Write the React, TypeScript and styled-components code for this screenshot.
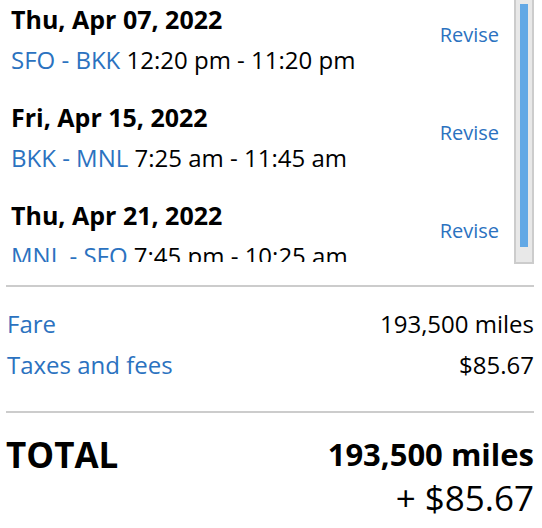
import styled, { createGlobalStyle } from 'styled-components';

const GlobalStyle = createGlobalStyle`
  html, body {
    margin: 0;
    padding: 0;
    background: #ffffff;
  }
  body {
    font-family: 'Open Sans', 'Noto Sans', sans-serif;
    color: #000000;
  }
`;

interface Flight {
  date: string;
  route: string;
  times: string;
}

const flights: Flight[] = [
  { date: 'Thu, Apr 07, 2022', route: 'SFO - BKK', times: '12:20 pm - 11:20 pm' },
  { date: 'Fri, Apr 15, 2022', route: 'BKK - MNL', times: '7:25 am - 11:45 am' },
  { date: 'Thu, Apr 21, 2022', route: 'MNL - SFO', times: '7:45 pm - 10:25 am' },
];

const App = () => {
  return (
    <>
      <GlobalStyle />
      <Page>
        <FlightPanel>
          <FlightList>
            {flights.map((flight, index) => (
              <FlightRow key={index}>
                <FlightInfo>
                  <FlightDate>{flight.date}</FlightDate>
                  <FlightLine>
                    <Route>{flight.route}</Route> {flight.times}
                  </FlightLine>
                </FlightInfo>
                <Revise href="#">Revise</Revise>
              </FlightRow>
            ))}
          </FlightList>
          <ScrollTrack>
            <ScrollThumb />
          </ScrollTrack>
        </FlightPanel>
        <Divider />
        <PriceRows>
          <PriceRow>
            <PriceLabel>Fare</PriceLabel>
            <PriceValue>193,500 miles</PriceValue>
          </PriceRow>
          <PriceRow>
            <PriceLabel>Taxes and fees</PriceLabel>
            <PriceValue>$85.67</PriceValue>
          </PriceRow>
        </PriceRows>
        <Divider />
        <Total>
          <TotalLabel>TOTAL</TotalLabel>
          <TotalValue>
            <TotalMiles>193,500 miles</TotalMiles>
            <TotalCash>+ $85.67</TotalCash>
          </TotalValue>
        </Total>
      </Page>
    </>
  );
};

export default App;

const Page = styled.div`
  width: 528px;
  padding: 0 8px 0 6px;
`;

const FlightPanel = styled.div`
  display: flex;
  height: 264px;
`;

const FlightList = styled.div`
  flex: 1;
  height: 262px;
  overflow: hidden;
`;

const FlightRow = styled.div`
  display: flex;
  align-items: center;
  justify-content: space-between;
  height: 80px;
  padding: 0 15px 18px 5px;
`;

const FlightInfo = styled.div`
  display: flex;
  flex-direction: column;
  white-space: nowrap;
`;

const FlightDate = styled.div`
  font-size: 25px;
  font-weight: 700;
  line-height: 39px;
`;

const FlightLine = styled.div`
  font-size: 24px;
  line-height: 41px;
`;

const Route = styled.span`
  color: #2b72c0;
`;

const Revise = styled.a`
  color: #2b72c0;
  font-size: 20px;
  text-decoration: none;
  margin-bottom: 12px;
`;

const ScrollTrack = styled.div`
  box-sizing: border-box;
  width: 20px;
  height: 264px;
  padding: 4px 4px 0;
  background: #e8e8e8;
  border: 2px solid #cccccc;
  border-top: none;
`;

const ScrollThumb = styled.div`
  width: 8px;
  height: 243px;
  background: #62a8e5;
`;

const Divider = styled.hr`
  margin: 21px 0 0;
  border: none;
  border-top: 2px solid #cccccc;
`;

const PriceRows = styled.div`
  display: flex;
  flex-direction: column;
  padding: 16px 0 5px 1px;
`;

const PriceRow = styled.div`
  display: flex;
  justify-content: space-between;
  align-items: baseline;
  font-size: 24px;
  line-height: 41px;
`;

const PriceLabel = styled.span`
  color: #2b72c0;
`;

const PriceValue = styled.span`
  color: #000000;
`;

const Total = styled.div`
  display: flex;
  justify-content: space-between;
  align-items: flex-start;
  padding-top: 19px;
`;

const TotalLabel = styled.div`
  font-size: 35px;
  font-weight: 700;
  line-height: 46px;
`;

const TotalValue = styled.div`
  display: flex;
  flex-direction: column;
  align-items: flex-end;
`;

const TotalMiles = styled.div`
  font-size: 31px;
  font-weight: 700;
  line-height: 44px;
`;

const TotalCash = styled.div`
  font-size: 35px;
  line-height: 44px;
`;
